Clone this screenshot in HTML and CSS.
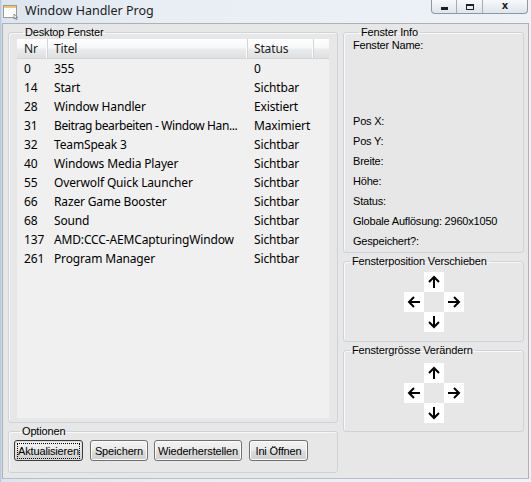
FILE: index.html
```html
<!DOCTYPE html>
<html lang="de">
<head>
<meta charset="utf-8">
<title>Window Handler Prog</title>
<link rel="stylesheet" href="styles.css">
</head>
<body>
<div class="window">
  <div class="titlebar">
    <svg class="app-icon" width="16" height="16" viewBox="0 0 16 16">
      <rect x="0.5" y="1.5" width="13" height="12" fill="#fff" stroke="#9a9a9a"/>
      <rect x="1" y="2" width="12" height="2" fill="#f1c66b"/>
      <path d="M11 10 v5 l1.2 -1.2 l1 2 l0.8 -0.4 l-1 -2 h1.7 z" fill="#fff" stroke="#555" stroke-width="0.6"/>
    </svg>
    <span class="title">Window Handler Prog</span>
    <div class="controls">
      <div class="ctl ctl-min"><span class="g-min"></span></div>
      <div class="ctl ctl-max"><span class="g-max"></span></div>
      <div class="ctl ctl-close"><span class="g-close">x</span></div>
    </div>
  </div>
  <div class="client">
    <div class="col-left">
      <fieldset class="group g-desktop">
        <legend>Desktop Fenster</legend>
        <div class="list">
          <div class="lv-row lv-head">
            <div class="c c-nr">Nr</div>
            <div class="c c-title">Titel</div>
            <div class="c c-status">Status</div>
            <div class="c c-fill"></div>
          </div>
          <div class="lv-row"><div class="c c-nr">0</div><div class="c c-title">355</div><div class="c c-status">0</div></div>
          <div class="lv-row"><div class="c c-nr">14</div><div class="c c-title">Start</div><div class="c c-status">Sichtbar</div></div>
          <div class="lv-row"><div class="c c-nr">28</div><div class="c c-title">Window Handler</div><div class="c c-status">Existiert</div></div>
          <div class="lv-row"><div class="c c-nr">31</div><div class="c c-title c-tight">Beitrag bearbeiten - Window Han...</div><div class="c c-status">Maximiert</div></div>
          <div class="lv-row"><div class="c c-nr">32</div><div class="c c-title">TeamSpeak 3</div><div class="c c-status">Sichtbar</div></div>
          <div class="lv-row"><div class="c c-nr">40</div><div class="c c-title">Windows Media Player</div><div class="c c-status">Sichtbar</div></div>
          <div class="lv-row"><div class="c c-nr">55</div><div class="c c-title">Overwolf Quick Launcher</div><div class="c c-status">Sichtbar</div></div>
          <div class="lv-row"><div class="c c-nr">66</div><div class="c c-title">Razer Game Booster</div><div class="c c-status">Sichtbar</div></div>
          <div class="lv-row"><div class="c c-nr">68</div><div class="c c-title">Sound</div><div class="c c-status">Sichtbar</div></div>
          <div class="lv-row"><div class="c c-nr">137</div><div class="c c-title">AMD:CCC-AEMCapturingWindow</div><div class="c c-status">Sichtbar</div></div>
          <div class="lv-row"><div class="c c-nr">261</div><div class="c c-title">Program Manager</div><div class="c c-status">Sichtbar</div></div>
        </div>
      </fieldset>
      <fieldset class="group g-options">
        <legend>Optionen</legend>
        <div class="btn-row">
          <button class="btn btn-default b-akt"><span class="focus">Aktualisieren</span></button>
          <button class="btn b-spe">Speichern</button>
          <button class="btn b-wie">Wiederherstellen</button>
          <button class="btn b-ini">Ini Öffnen</button>
        </div>
      </fieldset>
    </div>
    <div class="col-right">
      <fieldset class="group g-info">
        <legend>Fenster Info</legend>
        <div class="info">
          <div class="lbl">Fenster Name:</div>
          <div class="lbl lbl-gap">Pos X:</div>
          <div class="lbl">Pos Y:</div>
          <div class="lbl">Breite:</div>
          <div class="lbl">Höhe:</div>
          <div class="lbl">Status:</div>
          <div class="lbl">Globale Auflösung: 2960x1050</div>
          <div class="lbl">Gespeichert?:</div>
        </div>
      </fieldset>
      <fieldset class="group g-move">
        <legend>Fensterposition Verschieben</legend>
        <div class="pad">
          <div class="ab a-up"><svg width="20" height="20" viewBox="0 0 20 20"><path d="M10 16V5M5 10L10 5L15 10"/></svg></div>
          <div class="ab a-left"><svg width="20" height="20" viewBox="0 0 20 20"><path d="M16 10H5M10 5L5 10L10 15"/></svg></div>
          <div class="ab a-right"><svg width="20" height="20" viewBox="0 0 20 20"><path d="M4 10H15M10 5L15 10L10 15"/></svg></div>
          <div class="ab a-down"><svg width="20" height="20" viewBox="0 0 20 20"><path d="M10 4V15M5 10L10 15L15 10"/></svg></div>
        </div>
      </fieldset>
      <fieldset class="group g-size">
        <legend>Fenstergrösse Verändern</legend>
        <div class="pad">
          <div class="ab a-up"><svg width="20" height="20" viewBox="0 0 20 20"><path d="M10 16V5M5 10L10 5L15 10"/></svg></div>
          <div class="ab a-left"><svg width="20" height="20" viewBox="0 0 20 20"><path d="M16 10H5M10 5L5 10L10 15"/></svg></div>
          <div class="ab a-right"><svg width="20" height="20" viewBox="0 0 20 20"><path d="M4 10H15M10 5L15 10L10 15"/></svg></div>
          <div class="ab a-down"><svg width="20" height="20" viewBox="0 0 20 20"><path d="M10 4V15M5 10L10 15L15 10"/></svg></div>
        </div>
      </fieldset>
    </div>
  </div>
</div>
</body>
</html>
```
FILE: styles.css
```css
* { box-sizing: border-box; }
html, body { margin: 0; padding: 0; }
body {
  width: 531px;
  height: 482px;
  overflow: hidden;
  font-family: "Liberation Sans", Arial, sans-serif;
  font-size: 11px;
  color: #000;
}
.window {
  width: 531px;
  height: 482px;
  display: flex;
  flex-direction: column;
  background: linear-gradient(90deg, #aebfd4 0px, #dce5ef 2px, #e9eef4 30%, #eef2f7 100%);
}
.titlebar {
  height: 23px;
  display: flex;
  align-items: flex-start;
  flex: none;
}
.app-icon { margin: 4px 0 0 3px; flex: none; }
.title {
  margin: 3px 0 0 6px;
  font-family: "Noto Sans", "Open Sans", sans-serif;
  font-size: 12.5px;
  line-height: 16px;
  color: #1b1b1b;
}
.controls {
  margin-left: auto;
  margin-right: 3px;
  display: flex;
  height: 14px;
  border: 1px solid #8d98a6;
  border-top: none;
  border-radius: 0 0 4px 4px;
  background: linear-gradient(#f6f8fb, #dfe5ec);
  overflow: hidden;
}
.ctl {
  height: 13px;
  display: flex;
  align-items: center;
  justify-content: center;
  border-right: 1px solid #a3adb9;
}
.ctl-min { width: 25px; }
.ctl-max { width: 26px; }
.ctl-close { width: 44px; border-right: none; }
.g-min { width: 7px; height: 3px; background: #1e1e1e; margin-top: 3px; }
.g-max { width: 8px; height: 6px; border: 1px solid #1e1e1e; border-top-width: 2px; }
.g-close {
  font-family: "DejaVu Sans", sans-serif;
  font-weight: bold;
  font-size: 10px;
  line-height: 10px;
  color: #1e1e1e;
  margin-top: -2px;
}
.client {
  flex: none;
  height: 456px;
  margin: 0 2px;
  border: 1px solid #a9b1bb;
  border-bottom-color: #b7bec7;
  background: #e7e7e7;
  display: grid;
  grid-template-columns: 330px 181px;
  column-gap: 5px;
  padding-left: 5px;
  align-items: start;
}
.col-left, .col-right { display: flex; flex-direction: column; }

.group {
  margin: 2px 0 0;
  padding: 0;
  min-inline-size: 0;
  border: 1px solid #cdd3d9;
  border-radius: 3px;
  box-shadow: inset 1px 1px 0 #f8f8f8;
}
.group legend {
  margin-left: 6px;
  padding: 0 2px;
  font-size: 11px;
  line-height: 13px;
  letter-spacing: -0.15px;
  color: #000;
}
.g-desktop { padding: 0 8px 4px; }
.list {
  height: 379px;
  background: #f0f0f0;
  font-family: "Noto Sans", "Open Sans", sans-serif;
  font-size: 12px;
  letter-spacing: -0.15px;
  color: #000;
  overflow: hidden;
}
.lv-row {
  display: grid;
  grid-template-columns: 31px 200px 66px 15px;
  height: 19px;
  line-height: 19px;
}
.lv-head {
  height: 20px;
  line-height: 19px;
  background: linear-gradient(#ffffff 0%, #f7f8f9 45%, #eaebec 55%, #dfe0e1 100%);
  border-bottom: 1px solid #d5d5d5;
  color: #1e1e1e;
}
.lv-head .c { border-right: 1px solid #d5d5d5; box-shadow: inset -1px 0 0 #fcfcfc; }
.lv-head .c-fill { border-right: none; box-shadow: none; }
.c {
  white-space: nowrap;
  overflow: hidden;
}
.c-nr { padding-left: 7px; }
.c-title { padding: 0 6px; }
.c-tight { letter-spacing: -0.4px; padding-right: 0; }
.c-status { padding-left: 6px; }

.g-options { padding: 2px 0 11px 5px; }
.btn-row { display: flex; align-items: center; }
.btn {
  height: 21px;
  margin: 0 7px 0 0;
  padding: 0;
  font-family: "Liberation Sans", Arial, sans-serif;
  font-size: 11px;
  letter-spacing: -0.15px;
  color: #000;
  border: 1px solid #707070;
  border-radius: 3px;
  background: linear-gradient(#f2f2f2 0%, #ebebeb 48%, #dddddd 52%, #cfcfcf 100%);
  box-shadow: inset 0 0 0 1px #fbfbfb;
}
.btn-default { border-color: #3c3c3c; box-shadow: inset 0 0 0 1px #dcdcdc; }
.focus { display: block; margin: 2px; padding: 1px 0; border: 1px dotted #000; line-height: 12px; }
.b-akt { width: 69px; margin-right: 7px; }
.b-spe { width: 58px; margin-right: 6px; }
.b-wie { width: 88px; margin-right: 7px; }
.b-ini { width: 59px; }

.g-info { padding: 0 0 4px 9px; }
.info { display: flex; flex-direction: column; }
.lbl { line-height: 13px; margin-top: 7px; color: #000; letter-spacing: -0.2px; }
.lbl:first-child { margin-top: 0; }
.lbl-gap { margin-top: 63px; }

.g-move { padding: 4px 0 9px; }
.g-size { padding: 6px 0 8px; }
.pad {
  display: grid;
  grid-template-columns: 20px 20px 20px;
  grid-template-rows: 20px 20px 20px;
  width: 60px;
  margin: 0 auto;
}
.ab { background: #fff; width: 20px; height: 20px; }
.ab svg { display: block; }
.ab path { fill: none; stroke: #000; stroke-width: 2; }
.a-up { grid-column: 2; grid-row: 1; }
.a-left { grid-column: 1; grid-row: 2; }
.a-right { grid-column: 3; grid-row: 2; }
.a-down { grid-column: 2; grid-row: 3; }
```
